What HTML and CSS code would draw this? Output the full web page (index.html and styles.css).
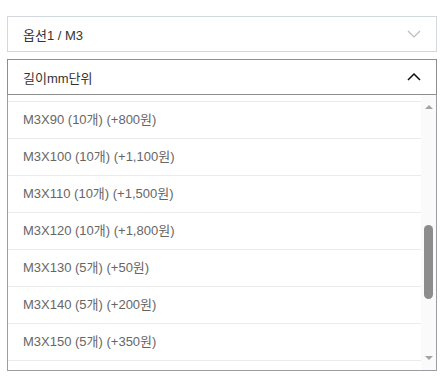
FILE: index.html
```html
<!DOCTYPE html>
<html lang="ko">
<head>
    <meta charset="UTF-8">
    <title>옵션 선택</title>
    <link rel="stylesheet" href="styles.css">
</head>
<body>
    <div class="options">
        <div class="select">
            <span class="select-label">옵션1 / M3</span>
            <svg class="chevron" width="14" height="8" viewBox="0 0 14 8"><path d="M1 1 L7 7 L13 1" fill="none" stroke="#b8bcc2" stroke-width="1.2"/></svg>
        </div>
        <div class="select-wrap">
            <div class="select select-open">
                <span class="select-label">길이mm단위</span>
                <svg class="chevron" width="14" height="8" viewBox="0 0 14 8"><path d="M1 7 L7 1 L13 7" fill="none" stroke="#111" stroke-width="1.5"/></svg>
            </div>
            <div class="dropdown">
                <div class="dropdown-list">
                    <div class="scrolled-edge"></div>
                    <ul class="items">
                        <li>M3X90 (10개) (+800원)</li>
                        <li>M3X100 (10개) (+1,100원)</li>
                        <li>M3X110 (10개) (+1,500원)</li>
                        <li>M3X120 (10개) (+1,800원)</li>
                        <li>M3X130 (5개) (+50원)</li>
                        <li>M3X140 (5개) (+200원)</li>
                        <li>M3X150 (5개) (+350원)</li>
                    </ul>
                </div>
                <div class="scrollbar">
                    <div class="arrow-up"></div>
                    <div class="track">
                        <div class="thumb" style="margin-top: 116px;"></div>
                    </div>
                    <div class="arrow-down"></div>
                </div>
            </div>
        </div>
        <div class="summary"></div>
    </div>
</body>
</html>
```

FILE: styles.css
```css
html, body {
    min-height: 378px;
}
body {
    margin: 0;
    background: #fff;
    font-family: "Liberation Sans", "Noto Sans CJK KR", sans-serif;
    font-size: 13px;
}
.options {
    padding: 16px 3px 40px 7px;
}
.select {
    box-sizing: border-box;
    height: 36px;
    border: 1px solid #d3d7de;
    display: flex;
    align-items: center;
    justify-content: space-between;
    padding: 0 15px 0 15px;
    color: #333;
    margin-bottom: 7px;
}
.select-open {
    border-color: #8e8e8e;
    margin-bottom: 0;
}
.chevron {
    display: block;
}
.select-wrap {
    position: relative;
}
.dropdown {
    position: absolute;
    top: 100%;
    left: 0;
    right: 0;
    height: 276px;
    box-sizing: border-box;
    border: 1px solid #9a9da3;
    border-top: none;
    background: #fff;
    display: flex;
    z-index: 2;
}
.dropdown-list {
    flex: 1;
    overflow: hidden;
}
/* bottom of the row scrolled out of view */
.scrolled-edge {
    height: 6px;
    border-bottom: 1px solid #ebebeb;
}
.items {
    list-style: none;
    margin: 0;
    padding: 0;
}
.items li {
    height: 36px;
    line-height: 36px;
    border-bottom: 1px solid #ebebeb;
    padding-left: 15px;
    color: #666;
}
.scrollbar {
    width: 15px;
    background: #fafafa;
    display: flex;
    flex-direction: column;
    align-items: center;
    padding: 10px 0 10px;
    box-sizing: border-box;
}
.arrow-up {
    width: 0;
    height: 0;
    border-left: 4px solid transparent;
    border-right: 4px solid transparent;
    border-bottom: 4px solid #a3a3a3;
}
.arrow-down {
    width: 0;
    height: 0;
    border-left: 4px solid transparent;
    border-right: 4px solid transparent;
    border-top: 4px solid #a3a3a3;
}
.track {
    flex: 1;
    width: 9px;
}
.thumb {
    width: 9px;
    height: 74px;
    border-radius: 5px;
    background: #8c8c8c;
}
.summary {
    margin-top: 252px;
    border-top: 1px solid #e3e3e3;
}
```
